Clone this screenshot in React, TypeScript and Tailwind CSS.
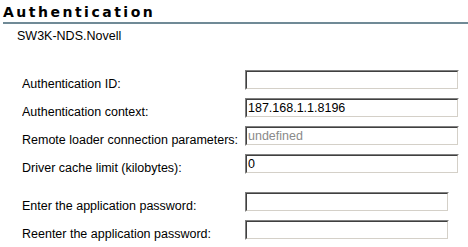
import React from "react";

const labelFont = { fontFamily: '"Liberation Sans", Arial, sans-serif' };

function Field({ value, width, muted, type = "text" }: { value?: string; width: string; muted?: boolean; type?: string }) {
  return (
    <span className={`block h-[20px] ${width} border border-t-[#808080] border-l-[#808080] border-r-white border-b-white`}>
      <input
        type={type}
        defaultValue={value}
        readOnly
        className={`block w-full h-full px-[1px] border border-t-[#404040] border-l-[#404040] border-r-[#d4d0c8] border-b-[#d4d0c8] bg-white text-[12.5px] outline-none ${muted ? "text-[#8a8a8a]" : "text-black"}`}
        style={labelFont}
      />
    </span>
  );
}

function Row({ label, children }: { label: string; children: React.ReactNode }) {
  return (
    <div className="flex items-start h-[20px]">
      <div className="w-[223px] shrink-0 pt-[7px] text-[12.5px] leading-[14px] text-black whitespace-nowrap overflow-hidden">
        {label}
      </div>
      {children}
    </div>
  );
}

export default function App() {
  return (
    <div className="w-[468px] h-[247px] bg-white pl-[3px] overflow-hidden" style={labelFont}>
      {/* header */}
      <div
        className="pt-[4px] mb-[2px] text-[14px] leading-[16px] font-bold tracking-[2.5px] text-black"
        style={{ fontFamily: '"DejaVu Sans", Verdana, sans-serif' }}
      >
        Authentication
      </div>
      <div className="h-[2px] bg-[#708a96]" />
      <div className="mt-[5px] pl-[14px] text-[12.5px] leading-[14px] text-black">SW3K-NDS.Novell</div>

      {/* fields */}
      <div className="mt-[27px] pl-[19px] flex flex-col gap-y-[8px]">
        <Row label="Authentication ID:">
          <Field width="w-[214px]" />
        </Row>
        <Row label="Authentication context:">
          <Field width="w-[214px]" value="187.168.1.1.8196" />
        </Row>
        <Row label="Remote loader connection parameters:">
          <Field width="w-[214px]" value="undefined" muted />
        </Row>
        <Row label="Driver cache limit (kilobytes):">
          <Field width="w-[214px]" value="0" />
        </Row>
      </div>

      <div className="mt-[18px] pl-[19px] flex flex-col gap-y-[8px]">
        <Row label="Enter the application password:">
          <Field width="w-[204px]" type="password" />
        </Row>
        <Row label="Reenter the application password:">
          <Field width="w-[204px]" type="password" />
        </Row>
      </div>
    </div>
  );
}
